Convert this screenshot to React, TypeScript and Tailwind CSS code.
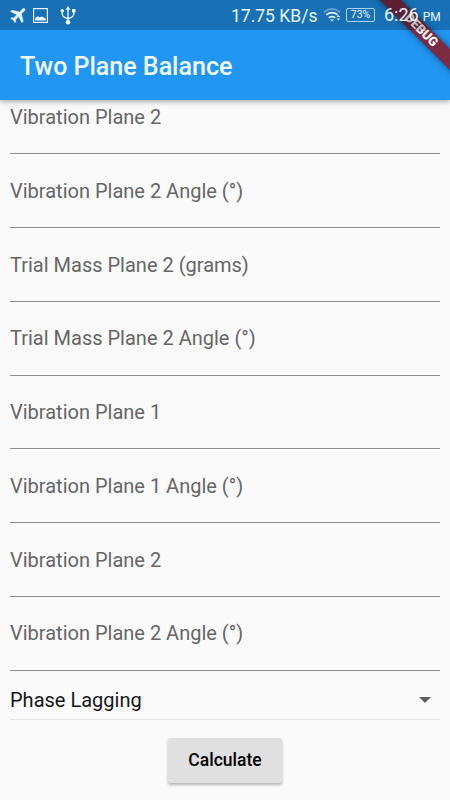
import { useState } from "react";

const fields = [
    "Vibration Plane 2",
    "Vibration Plane 2 Angle (°)",
    "Trial Mass Plane 2 (grams)",
    "Trial Mass Plane 2 Angle (°)",
    "Vibration Plane 1",
    "Vibration Plane 1 Angle (°)",
    "Vibration Plane 2",
    "Vibration Plane 2 Angle (°)",
];

function StatusBar() {
    return (
        <div className="relative z-20 flex h-[30px] items-center bg-black/25 pl-[9px] text-[#e6f6ff]">
            <svg viewBox="0 0 24 24" className="h-5 w-5 rotate-45" fill="currentColor" stroke="currentColor" strokeWidth="0.7">
                <path d="M21 16v-2l-8-5V3.5a1.5 1.5 0 0 0-3 0V9l-8 5v2l8-2.5V19l-2 1.5V22l3.5-1 3.5 1v-1.5L13 19v-5.5z" />
            </svg>
            <svg viewBox="0 0 15 15" className="ml-1 h-[15px] w-[15px]">
                <rect x="0.6" y="0.6" width="13.8" height="13.8" fill="none" stroke="currentColor" strokeWidth="1.2" />
                <path d="M2.3 12.5V10l2.5-1.8 2 1L9 8.4l3.7 2v2.1z" fill="currentColor" />
            </svg>
            <svg viewBox="0 0 16 19" className="ml-3 h-[19px] w-4" fill="none" stroke="currentColor" strokeWidth="1.4">
                <path d="M8 3v13M2.3 5v3.2Q2.3 10.4 4.3 11.2L8 13M13.7 5v3.2q0 2.2-2 3L8 13" />
                <path d="M8 0l2.4 3.8H5.6z" fill="currentColor" stroke="none" />
                <circle cx="2.3" cy="4.8" r="1.8" fill="currentColor" stroke="none" />
                <rect x="12" y="3" width="3.5" height="3.5" fill="currentColor" stroke="none" />
                <circle cx="8" cy="16.3" r="2.3" fill="currentColor" stroke="none" />
            </svg>
            <div className="ml-[155px] w-[87px] pt-px text-[17.5px] leading-[30px] whitespace-nowrap">17.75 KB/s</div>
            <svg viewBox="0 0 18 14" className="ml-[5px] h-[14px] w-[18px] shrink-0" fill="none" stroke="currentColor" strokeWidth="1.6">
                <path d="M0.8 4.3Q9-2.6 17.2 4.3" opacity="0.4" />
                <path d="M3.3 6.9Q9 2.4 14.7 6.9M5.8 9.8Q9 7.4 12.2 9.8" />
                <path d="M9 13.6l-1.9-2.1h3.8z" fill="currentColor" stroke="none" />
                <path d="M15.4 7l1.7 2h-3.4zM15.4 12.6l1.7-2h-3.4z" fill="currentColor" stroke="none" />
            </svg>
            <div className="ml-[5px] flex h-[14px] w-[29px] shrink-0 items-center justify-center rounded-[2px] border border-[#a9d2f0] text-[10.5px] leading-none">
                73%
            </div>
            <div className="ml-[9px] flex items-baseline gap-1 pt-0.5 leading-[28px] whitespace-nowrap">
                <span className="text-[18px]">6:26</span>
                <span className="text-[12px]">PM</span>
            </div>
        </div>
    );
}

function DebugBanner() {
    return (
        <div className="pointer-events-none absolute top-0 right-0 z-10 h-[100px] w-[100px] overflow-hidden">
            <div className="absolute top-[22.5px] left-[-9px] flex h-[15px] w-[160px] rotate-45 items-center justify-center bg-[#7d2a45] text-[12.75px] leading-none font-black text-white shadow-[0_0_6px_rgba(0,0,0,0.5)]">
                DEBUG
            </div>
        </div>
    );
}

function Field({ label }: { label: string }) {
    return (
        <label className="relative block h-[73.8px] border-b border-[#8c8c8c]">
            <span className="absolute top-[24.6px] left-0 text-[20px] leading-6 whitespace-nowrap text-[#666]">{label}</span>
            <input className="h-full w-full bg-transparent pt-6 text-[20px] outline-none" aria-label={label} />
        </label>
    );
}

export default function App() {
    const [phase] = useState("Phase Lagging");

    return (
        <div className="relative flex h-[800px] w-[450px] flex-col overflow-hidden bg-[#fafafa] font-[Roboto,sans-serif]">
            <header className="relative z-10 h-[100px] shrink-0 bg-[#2196f3] shadow-[0_2px_5px_rgba(0,0,0,0.3)]">
                <DebugBanner />
                <StatusBar />
                <h1 className="pl-5 text-[25px] leading-[74px] font-medium text-[#f0faff]">Two Plane Balance</h1>
            </header>
            <main className="-mt-[19.7px] flex flex-col px-[10px]">
                {fields.map((label, index) => (
                    <Field key={index} label={label} />
                ))}
                <button className="flex h-[49.5px] items-center justify-between border-b border-[#e6e6e6] pt-[11px] pr-[9px] text-left text-[20px] text-[#161616]">
                    <span>{phase}</span>
                    <svg viewBox="0 0 12 6" className="h-[6px] w-3" fill="#616161">
                        <path d="M0 0h12L6 6z" />
                    </svg>
                </button>
                <button className="mt-[17.4px] h-[45px] w-[114px] self-center rounded-[2.5px] bg-[#e0e0e0] text-[17.5px] font-medium text-black shadow-[0_2px_3px_rgba(0,0,0,0.28)]">
                    Calculate
                </button>
            </main>
        </div>
    );
}
